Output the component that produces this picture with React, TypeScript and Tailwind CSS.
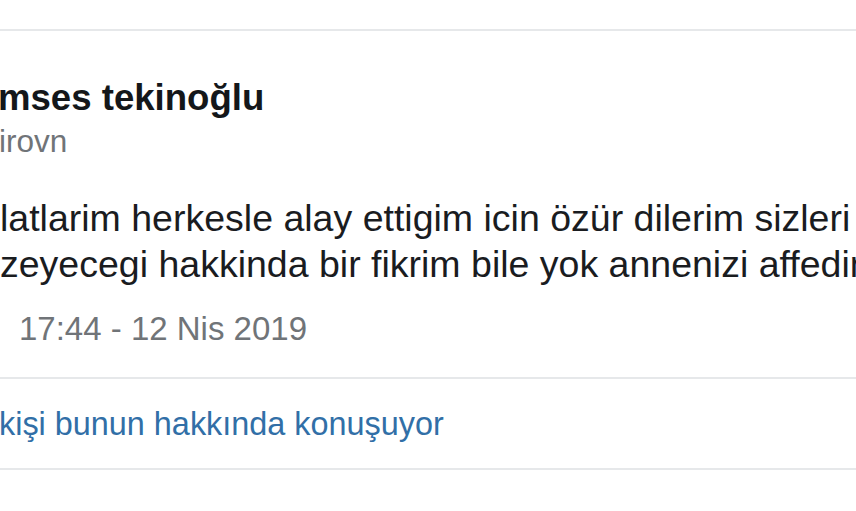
export default function App() {
  return (
    <div className="w-[856px] h-[511px] overflow-hidden bg-white font-['Liberation_Sans',Arial,sans-serif]">
      <div className="h-[29px]" />
      <div className="h-[2px] bg-[#e6e8ea]" />

      <div className="mt-[47px] -ml-[2px] whitespace-nowrap text-[36.6px] leading-[40px] font-bold text-[#14171a]">
        mses tekinoğlu
      </div>
      <div className="mt-[5px] -ml-[1px] whitespace-nowrap text-[31.5px] leading-[36px] text-[#707478]">
        irovn
      </div>

      <div className="mt-[36px] whitespace-nowrap text-[37.5px] leading-[46px] text-[#1a1c1f]">
        <div>latlarim herkesle alay ettigim icin özür dilerim sizleri</div>
        <div>zeyecegi hakkinda bir fikrim bile yok annenizi affedin</div>
      </div>

      <div className="mt-[23px] pl-[19px] whitespace-nowrap text-[33px] leading-[38px] text-[#707478]">
        17:44 - 12 Nis 2019
      </div>

      <div className="mt-[29px] h-[2px] bg-[#e6e8ea]" />

      <div className="mt-[26px] -ml-[1px] whitespace-nowrap text-[32.4px] leading-[38px] text-[#316fa7]">
        kişi bunun hakkında konuşuyor
      </div>

      <div className="mt-[25px] h-[2px] bg-[#e6e8ea]" />
    </div>
  );
}
